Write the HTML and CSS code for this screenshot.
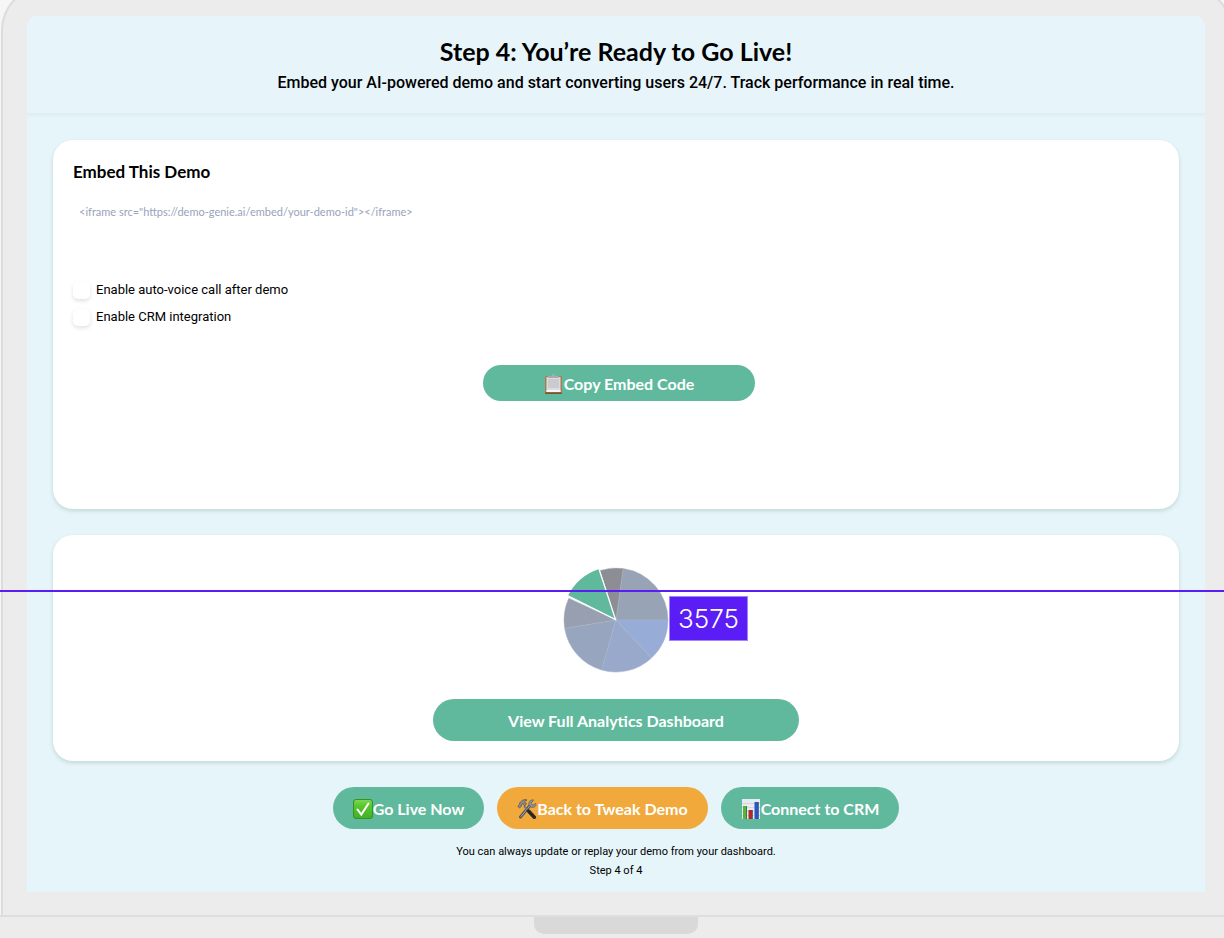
FILE: index.html
```html
<!DOCTYPE html>
<html lang="en">
<head>
<meta charset="utf-8">
<meta name="viewport" content="width=device-width, initial-scale=1">
<title>Step 4: You’re Ready to Go Live!</title>
<link rel="stylesheet" href="styles.css">
</head>
<body>
<div class="laptop">
  <div class="lid">
    <div class="screen">
      <header class="header">
        <h1 class="title">Step 4: You’re Ready to Go Live!</h1>
        <p class="subtitle">Embed your AI-powered demo and start converting users 24/7. Track performance in real time.</p>
      </header>
      <main class="content">
        <section class="card embed">
          <h2 class="card-title"><label for="code">Embed This Demo</label></h2>
          <textarea class="code" id="code" readonly>&lt;iframe src="https://demo-genie.ai/embed/your-demo-id"&gt;&lt;/iframe&gt;</textarea>
          <div class="options">
            <label class="option"><input class="check" type="checkbox">Enable auto-voice call after demo</label>
            <label class="option"><input class="check" type="checkbox">Enable CRM integration</label>
          </div>
          <div class="embed-action">
            <button class="btn btn-copy" type="button">
              <svg class="icon" viewBox="0 0 20 20" aria-hidden="true">
                <rect x="1" y="2" width="17" height="18" rx="1" fill="#a87d50"/>
                <path d="M1 18.500h17V19a1 1 0 0 1-1 1H2a1 1 0 0 1-1-1z" fill="#765331"/>
                <path d="M2.500 3h14v15h-14z" fill="#dcdcdf"/>
                <path d="M4 5h11v9H4z" fill="#cbcbcf"/>
                <path d="M2.500 16h14v2h-14z" fill="#f8f8f8"/>
                <path d="M4 2h3.500Q8 0 9.500 0T11.500 2H15v2H4z" fill="#a6abad"/>
              </svg>Copy Embed Code</button>
          </div>
        </section>
        <section class="card analytics">
          <svg class="pie" viewBox="0 0 106 106" role="img" aria-label="Demo performance breakdown">
            <g stroke="#a7b3c5" stroke-width=".5">
              <path d="M53 53L105 53A52 52 0 0 0 60.200 1.500Z" fill="#98a3b5"/>
              <path d="M53 53L60.200 1.500A52 52 0 0 0 37 3.500Z" fill="#8d8e95"/>
              <path d="M53 53L5.800 31.200A52 52 0 0 0 1.700 61.500Z" fill="#979fb0"/>
              <path d="M53 53L1.700 61.500A52 52 0 0 0 38.500 103Z" fill="#98a5be"/>
              <path d="M53 53L38.500 103A52 52 0 0 0 88.500 91Z" fill="#98a9cc"/>
              <path d="M53 53L88.500 91A52 52 0 0 0 105 53Z" fill="#98acd8"/>
            </g>
            <path d="M52.500 52.500L35.800 1.500A54 54 0 0 0 4.500 28.500Z" fill="#60b99d" stroke="#fff" stroke-width="1.200"/>
          </svg>
          <button class="btn btn-wide" type="button">View Full Analytics Dashboard</button>
        </section>
        <div class="actions">
          <button class="btn" type="button">
            <svg class="icon" viewBox="0 0 20 20" aria-hidden="true">
              <defs><linearGradient id="tick" x2="0" y2="1"><stop stop-color="#7ed957"/><stop offset=".35" stop-color="#59c52d"/><stop offset="1" stop-color="#43af28"/></linearGradient></defs>
              <rect x=".500" y=".500" width="19" height="19" rx="2.500" fill="url(#tick)" stroke="#329421"/>
              <path d="M4.500 10.500L8.300 15.500L15.500 4.500" fill="none" stroke="#fff" stroke-width="2" stroke-linecap="round"/>
            </svg>Go Live Now</button>
          <button class="btn btn-orange" type="button">
            <svg class="icon" viewBox="0 0 20 20" aria-hidden="true">
              <path d="M13 6.500L3.500 18" stroke="#55565a" stroke-width="3" stroke-linecap="round"/>
              <path d="M13.500 6L4 17.500" stroke="#a9abb0" stroke-width="1" stroke-linecap="round"/>
              <path d="M18.800 4.300L16 6.200L14.200 4.500L16.500.900C13.500.400 11.200 3 12 6l2 2.300c3.300.600 5.800-1.100 4.800-4z" fill="#8e9095" stroke="#55565a" stroke-width=".600"/>
              <path d="M7 7L12 12.500" stroke="#77797e" stroke-width="2"/>
              <path d="M11.500 12L17.300 18.300" stroke="#2a2727" stroke-width="3.500" stroke-linecap="round"/>
              <path d="M.800 7.200L2.500 9L4.500 7.200L4.200 6L6 4.500L7.500 6.800L9.500 5L7.500 2.800L10 .900C7.500.200 5 .800 2.800 3.800L2.500 5.500Z" fill="#8b8d92" stroke="#48494d" stroke-width=".700"/>
            </svg>Back to Tweak Demo</button>
          <button class="btn" type="button">
            <svg class="icon" viewBox="0 0 20 20" aria-hidden="true">
              <path d="M1 0h18v20H1z" fill="#e6ebf2"/>
              <path d="M1 4.500h18M1 8.500h18M1 12.500h18M1 16.500h18" stroke="#bfc8d5" stroke-width=".600"/>
              <path d="M2 7h4v13H2z" fill="#55b63a"/>
              <path d="M7.500 11h4v9h-4z" fill="#b3262a"/>
              <path d="M13.500 3h4v17h-4z" fill="#2b55c1"/>
              <path d="M5.500 7H6v13h-.500zM11 11h.500v9H11zM17 3h.500v17H17z" fill="#333a55"/>
            </svg>Connect to CRM</button>
        </div>
        <footer class="notes">
          <p class="note">You can always update or replay your demo from your dashboard.</p>
          <p class="note">Step 4 of 4</p>
        </footer>
      </main>
    </div>
  </div>
  <div class="base"><div class="notch"></div></div>
  <div class="guide"><span class="guide-label">3575</span></div>
</div>
</body>
</html>
```
FILE: styles.css
```css
* { box-sizing: border-box; }

body {
  margin: 0;
  background: #f6f6f6;
  color: #000;
  font-family: Roboto, sans-serif;
}

h1, h2, p { margin: 0; }

.laptop {
  position: relative;
  display: flex;
  flex-direction: column;
  min-height: 100vh;
  overflow: hidden;
}

/* The lid runs past the top and right edges of the window. */
.lid {
  margin: -14px -8px 0 1px;
  padding: 28px 25px 23px 24px;
  border: 2px solid #dcdcdc;
  border-bottom: 0;
  border-radius: 44px 44px 0 0;
  background: #ececec;
}

.screen {
  border-radius: 10px 10px 0 0;
  background: #e6f5f9;
  overflow: hidden;
}

.header {
  padding: 19px 24px 18px;
  text-align: center;
  background: #e7f5fa;
  box-shadow: 0 2px 4px rgba(80, 130, 110, .08);
}

.title {
  font: 700 25px/32px Lato, sans-serif;
}

.subtitle {
  margin-top: 4px;
  font-size: 16px;
  font-weight: 500;
  line-height: 24px;
}

.content {
  display: flex;
  flex-direction: column;
  gap: 26px;
  padding: 27px 26px 12px;
}

.card {
  display: flex;
  flex-direction: column;
  padding: 20px;
  border-radius: 20px;
  background: #fff;
  box-shadow: 0 2px 4px rgba(60, 100, 90, .2);
}

.embed { padding-bottom: 108px; }

.card-title {
  font: 700 17px/24px Lato, sans-serif;
}

.code {
  height: 80px;
  margin-top: 12px;
  padding: 8px 6px;
  border: 0;
  outline: 0;
  resize: none;
  background: transparent;
  color: #98a3b9;
  font: 400 11px/16px Lato, sans-serif;
}

.options {
  display: flex;
  flex-direction: column;
  align-items: flex-start;
  gap: 7px;
  margin-top: 4px;
}

.option {
  display: flex;
  align-items: center;
  gap: 6px;
  font-size: 13px;
  line-height: 20px;
}

.check {
  appearance: none;
  width: 17px;
  height: 17px;
  margin: 0;
  border-radius: 5px;
  background: #fff;
  box-shadow: 0 2px 4px rgba(0, 0, 0, .12);
}

.check:checked { background: #60b99d; }

.embed-action {
  display: flex;
  justify-content: center;
  margin-top: 38px;
  padding-left: 6px;
}

.btn {
  display: flex;
  align-items: center;
  justify-content: center;
  min-height: 42px;
  padding: 2px 20px 0;
  border: 0;
  border-radius: 21px;
  background: #60b99d;
  color: #fff;
  font: 700 16px/24px Lato, sans-serif;
  cursor: pointer;
}

.btn-copy {
  width: 272px;
  min-height: 36px;
}

.btn-wide {
  width: 366px;
  max-width: 100%;
}

.btn-orange { background: #f1a93b; }

.icon {
  flex: none;
  width: 20px;
  height: 20px;
}

.analytics {
  align-items: center;
  gap: 26px;
  padding-top: 32px;
}

.pie {
  width: 106px;
  height: 106px;
}

.actions {
  display: flex;
  flex-wrap: wrap;
  justify-content: center;
  gap: 13px;
}

.notes {
  margin-top: -13px;
  text-align: center;
}

.note {
  font-size: 11px;
  line-height: 19px;
}

.base {
  flex: 1;
  min-height: 23px;
  padding-left: 8px;
  border-top: 2px solid #dedede;
  background: #ececec;
}

.notch {
  width: 164px;
  height: 17px;
  margin: 0 auto;
  border-radius: 0 0 10px 10px;
  background: #d9d9d9;
}

/* Measuring guide laid over the whole window. */
.guide {
  position: absolute;
  top: 590px;
  left: 0;
  right: 0;
  border-top: 2px solid #5b1df5;
}

.guide-label {
  position: absolute;
  top: 4px;
  left: calc(50% + 57px);
  padding: 4px 8px;
  border: 1px solid #a584fa;
  background: #5b1df5;
  color: #fff;
  font: 300 26px/35px Inter, sans-serif;
}
```
